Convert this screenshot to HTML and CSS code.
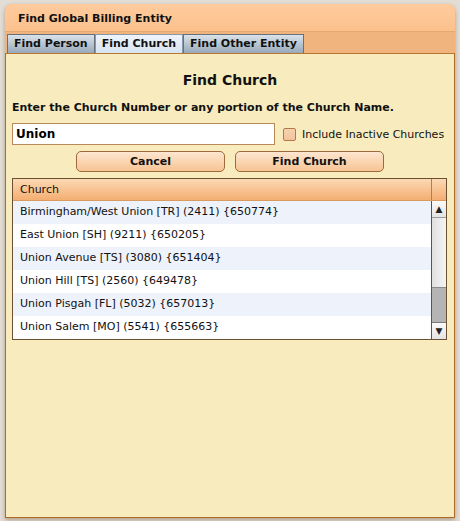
FILE: index.html
```html
<!DOCTYPE html>
<html>
    <head>
        <title>Find Global Billing Entity</title>
        <meta charset="UTF-8">
        <link rel="stylesheet" href="styles.css">
    </head>
    <body>
        <div class="dialog">
            <div class="titleBar">Find Global Billing Entity</div>

            <div class="tabBar">
                <div class="tab">Find Person</div>
                <div class="tab active">Find Church</div>
                <div class="tab">Find Other Entity</div>
            </div>

            <div class="content">
                <h1 class="heading">Find Church</h1>
                <p class="prompt">Enter the Church Number or any portion of the Church Name.</p>

                <div class="searchRow">
                    <input class="searchBox" type="text" value="Union">
                    <label class="inactive"><span class="check"></span>Include Inactive Churches</label>
                </div>

                <div class="buttonRow">
                    <button class="btn">Cancel</button>
                    <button class="btn">Find Church</button>
                </div>

                <div class="grid">
                    <div class="gridHeader">
                        <div class="headCell">Church</div>
                        <div class="headSpacer"></div>
                    </div>
                    <div class="gridBody">
                        <div class="rows">
                            <div class="row">Birmingham/West Union [TR] (2411) {650774}</div>
                            <div class="row">East Union [SH] (9211) {650205}</div>
                            <div class="row">Union Avenue [TS] (3080) {651404}</div>
                            <div class="row">Union Hill [TS] (2560) {649478}</div>
                            <div class="row">Union Pisgah [FL] (5032) {657013}</div>
                            <div class="row">Union Salem [MO] (5541) {655663}</div>
                        </div>
                        <div class="scrollbar">
                            <div class="arrow up">&#9650;</div>
                            <div class="track"><div class="thumb"></div></div>
                            <div class="arrow down">&#9660;</div>
                        </div>
                    </div>
                </div>
            </div>
        </div>
    </body>
</html>
```

FILE: styles.css
```css
* {
    margin: 0;
    padding: 0;
    box-sizing: border-box;
}

body {
    background: #e2ddd5;
    font-family: "DejaVu Sans", Verdana, sans-serif;
    color: #111;
    padding: 4px 5px 0 5px;
    height: 521px;
    overflow: hidden;
}

.dialog {
    width: 450px;
    height: 514px;
    display: flex;
    flex-direction: column;
    border-radius: 7px 7px 0 0;
    background: #f0b47f;
    box-shadow: 0 2px 4px rgba(120, 80, 40, 0.45);
}

.titleBar {
    height: 28px;
    padding: 8px 0 0 13px;
    font-size: 11px;
    font-weight: bold;
    background: linear-gradient(#ffcb9d, #fbc18d);
    border-radius: 7px 7px 0 0;
    border-bottom: 1px solid #e8a970;
}

.tabBar {
    height: 21px;
    display: flex;
    align-items: flex-end;
    padding-left: 2px;
    background: #f0b47f;
}

.tab {
    height: 19px;
    padding: 2px 6px 0 6px;
    font-size: 11px;
    font-weight: bold;
    border: 1px solid #6b6f78;
    border-bottom: 0;
    background: linear-gradient(#d9e2ea, #98a9ba);
}

.tab.active {
    background: linear-gradient(#eef4fb, #d6e3f1);
    border-color: #8a97a6;
}

.content {
    flex: 1;
    background: #f8ebbd;
    border: 1px solid #b06a28;
    border-top: 1px solid #b8772f;
    padding: 0 6px;
}

.heading {
    text-align: center;
    font-size: 14px;
    font-weight: bold;
    margin-top: 18px;
}

.prompt {
    font-size: 11px;
    font-weight: bold;
    margin-top: 13px;
}

.searchRow {
    display: flex;
    align-items: center;
    margin-top: 9px;
}

.searchBox {
    width: 263px;
    height: 22px;
    border: 1px solid #b98a57;
    padding-left: 3px;
    font-family: "DejaVu Sans", Verdana, sans-serif;
    font-size: 12px;
    font-weight: bold;
    background: #fff;
}

.inactive {
    display: flex;
    align-items: center;
    font-size: 11px;
    margin-left: 8px;
}

.check {
    width: 13px;
    height: 13px;
    border: 1px solid #b37a48;
    border-radius: 2px;
    background: linear-gradient(#f6d2b0, #f2c49c);
    margin-right: 6px;
}

.buttonRow {
    display: flex;
    justify-content: center;
    gap: 10px;
    margin-top: 6px;
}

.btn {
    width: 149px;
    height: 21px;
    border: 1px solid #9c6a3c;
    border-radius: 5px;
    background: linear-gradient(#fde6d0, #f7c494);
    font-family: "DejaVu Sans", Verdana, sans-serif;
    font-size: 11px;
    font-weight: bold;
    color: #111;
}

.grid {
    margin-top: 6px;
    width: 435px;
    border: 1px solid #6d5031;
    background: #fff;
}

.gridHeader {
    display: flex;
    height: 22px;
    background: linear-gradient(#fbd9b4, #f4ae72);
    border-bottom: 1px solid #d99a60;
}

.headCell {
    flex: 1;
    font-size: 11px;
    padding: 4px 0 0 7px;
    border-right: 1px solid #c17c3c;
}

.headSpacer {
    width: 14px;
}

.gridBody {
    display: flex;
}

.rows {
    flex: 1;
}

.row {
    height: 23px;
    padding: 4px 0 0 7px;
    font-size: 11px;
    white-space: nowrap;
}

.row:nth-child(odd) {
    background: #eef2fa;
}

.scrollbar {
    width: 15px;
    display: flex;
    flex-direction: column;
    border-left: 1px solid #6d5031;
    background: #e8e8e8;
}

.arrow {
    height: 17px;
    font-size: 9px;
    text-align: center;
    line-height: 17px;
    color: #222;
    background: linear-gradient(#fafafa, #e4e4e4);
}

.arrow.up {
    border-bottom: 1px solid #9a9a9a;
}

.arrow.down {
    border-top: 1px solid #7a7a7a;
}

.track {
    flex: 1;
    display: flex;
    flex-direction: column;
    justify-content: flex-end;
    background: linear-gradient(90deg, #e0e0e0, #f4f4f4);
}

.thumb {
    height: 35px;
    background: #b4b4b4;
    border-top: 1px solid #8a8a8a;
}
```
